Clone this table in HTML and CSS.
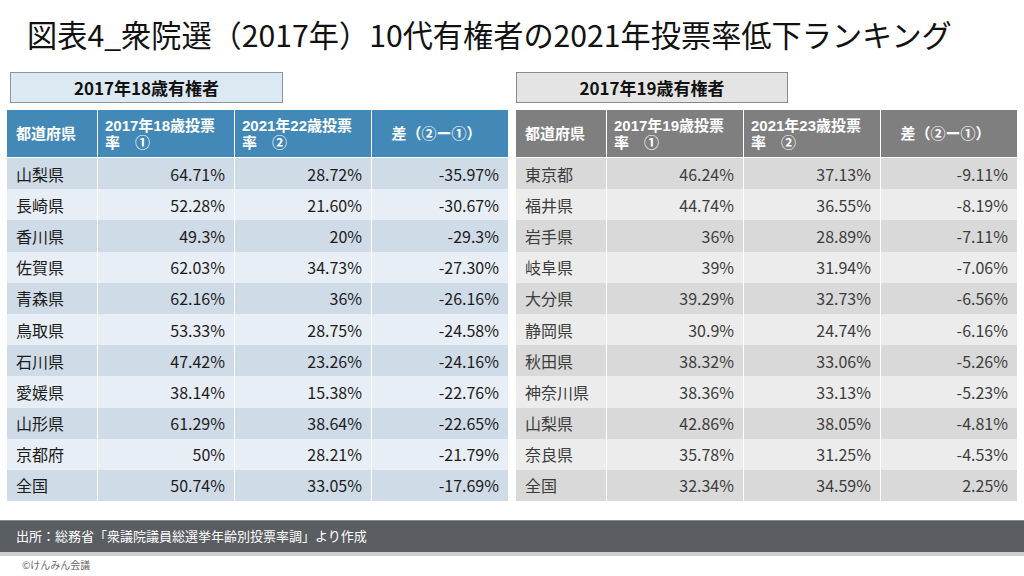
FILE: index.html
```html
<!DOCTYPE html>
<html lang="ja">
<head>
<meta charset="utf-8">
<title>図表4</title>
<link rel="stylesheet" href="styles.css">
</head>
<body>
<div class="page">
  <h1 class="title">図表4_衆院選（2017年）10代有権者の2021年投票率低下ランキング</h1>
  <div class="panels">
    <section class="panel blue">
      <div class="label">2017年18歳有権者</div>
      <div class="grid">
        <div class="h first">都道府県</div>
        <div class="h">2017年18歳投票<br>率　①</div>
        <div class="h">2021年22歳投票<br>率　②</div>
        <div class="h center">差（②ー①）</div>

        <div class="c o name">山梨県</div><div class="c o num">64.71%</div><div class="c o num">28.72%</div><div class="c o num">-35.97%</div>
        <div class="c e name">長崎県</div><div class="c e num">52.28%</div><div class="c e num">21.60%</div><div class="c e num">-30.67%</div>
        <div class="c o name">香川県</div><div class="c o num">49.3%</div><div class="c o num">20%</div><div class="c o num">-29.3%</div>
        <div class="c e name">佐賀県</div><div class="c e num">62.03%</div><div class="c e num">34.73%</div><div class="c e num">-27.30%</div>
        <div class="c o name">青森県</div><div class="c o num">62.16%</div><div class="c o num">36%</div><div class="c o num">-26.16%</div>
        <div class="c e name">鳥取県</div><div class="c e num">53.33%</div><div class="c e num">28.75%</div><div class="c e num">-24.58%</div>
        <div class="c o name">石川県</div><div class="c o num">47.42%</div><div class="c o num">23.26%</div><div class="c o num">-24.16%</div>
        <div class="c e name">愛媛県</div><div class="c e num">38.14%</div><div class="c e num">15.38%</div><div class="c e num">-22.76%</div>
        <div class="c o name">山形県</div><div class="c o num">61.29%</div><div class="c o num">38.64%</div><div class="c o num">-22.65%</div>
        <div class="c e name">京都府</div><div class="c e num">50%</div><div class="c e num">28.21%</div><div class="c e num">-21.79%</div>
        <div class="c o name">全国</div><div class="c o num">50.74%</div><div class="c o num">33.05%</div><div class="c o num">-17.69%</div>
      </div>
    </section>
    <section class="panel gray">
      <div class="label">2017年19歳有権者</div>
      <div class="grid">
        <div class="h first">都道府県</div>
        <div class="h">2017年19歳投票<br>率　①</div>
        <div class="h">2021年23歳投票<br>率　②</div>
        <div class="h center">差（②ー①）</div>

        <div class="c o name">東京都</div><div class="c o num">46.24%</div><div class="c o num">37.13%</div><div class="c o num">-9.11%</div>
        <div class="c e name">福井県</div><div class="c e num">44.74%</div><div class="c e num">36.55%</div><div class="c e num">-8.19%</div>
        <div class="c o name">岩手県</div><div class="c o num">36%</div><div class="c o num">28.89%</div><div class="c o num">-7.11%</div>
        <div class="c e name">岐阜県</div><div class="c e num">39%</div><div class="c e num">31.94%</div><div class="c e num">-7.06%</div>
        <div class="c o name">大分県</div><div class="c o num">39.29%</div><div class="c o num">32.73%</div><div class="c o num">-6.56%</div>
        <div class="c e name">静岡県</div><div class="c e num">30.9%</div><div class="c e num">24.74%</div><div class="c e num">-6.16%</div>
        <div class="c o name">秋田県</div><div class="c o num">38.32%</div><div class="c o num">33.06%</div><div class="c o num">-5.26%</div>
        <div class="c e name">神奈川県</div><div class="c e num">38.36%</div><div class="c e num">33.13%</div><div class="c e num">-5.23%</div>
        <div class="c o name">山梨県</div><div class="c o num">42.86%</div><div class="c o num">38.05%</div><div class="c o num">-4.81%</div>
        <div class="c e name">奈良県</div><div class="c e num">35.78%</div><div class="c e num">31.25%</div><div class="c e num">-4.53%</div>
        <div class="c o name">全国</div><div class="c o num">32.34%</div><div class="c o num">34.59%</div><div class="c o num">2.25%</div>
      </div>
    </section>
  </div>
  <footer class="source">出所：総務省「衆議院議員総選挙年齢別投票率調」より作成</footer>
  <div class="copy">©けんみん会議</div>
</div>
</body>
</html>
```
FILE: styles.css
```css
* { box-sizing: border-box; }
html, body { margin: 0; padding: 0; background: #fff; }
body {
  width: 1024px;
  height: 576px;
  overflow: hidden;
  font-family: "Noto Sans CJK JP", "Noto Sans", sans-serif;
  color: #1a1a1a;
}
.page { display: flex; flex-direction: column; }
.title {
  margin: 0;
  height: 72px;
  padding: 15px 0 0 27px;
  font-size: 30.2px;
  font-weight: 400;
  line-height: 38px;
  color: #111;
  white-space: nowrap;
}
.panels {
  display: flex;
  gap: 11px;
  padding-left: 7px;
}
.panel { width: 498px; display: flex; flex-direction: column; }
.label {
  width: 273px;
  height: 31px;
  margin-left: 3px;
  border: 1px solid #8796a3;
  font-size: 17px;
  font-weight: 700;
  line-height: 29px;
  text-align: center;
  color: #111;
}
.blue .label { background: #dce9f3; }
.gray .label { background: #e4e4e4; border-color: #8a8a8a; margin-left: 0; width: 272px; }
.grid {
  margin-top: 7px;
  display: grid;
  grid-template-columns: 90px 136px 136px 136px;
  grid-template-rows: 48px;
  grid-auto-rows: 31.2px;
  column-gap: 1px;
  background: #fff;
}
.h {
  color: #fff;
  font-family: "Liberation Sans", "Noto Sans CJK JP", sans-serif;
  font-size: 15px;
  font-weight: 700;
  line-height: 17.5px;
  padding: 1px 7px 0;
  display: flex;
  align-items: center;
  border-bottom: 1px solid #fff;
}
.h.first { padding-left: 9px; }
.h.center { justify-content: center; padding-right: 14px; }
.blue .h { background: #4389b8; }
.gray .h { background: #7f7f7f; }
.c {
  font-size: 16px;
  line-height: 1;
  display: flex;
  align-items: center;
  padding: 0 10px;
}
.name { padding-left: 9px; }
.num { justify-content: flex-end; padding-right: 9px; }
.blue .c { color: #1c1c1c; }
.blue .o { background: #cfdbe7; }
.blue .e { background: #e8eef5; }
.gray .c { color: #3d3d3d; }
.gray .o { background: #d9d9d9; }
.gray .e { background: #ececec; }
.source {
  margin-top: 19px;
  height: 36px;
  background: #5a5e62;
  border-top: 1px solid #7d8a92;
  border-bottom: 4px solid #c9cfcf;
  color: #fff;
  font-size: 13px;
  line-height: 30px;
  padding-left: 16px;
}
.copy {
  font-size: 10px;
  color: #666;
  padding: 2px 0 0 22px;
  line-height: 14px;
}
```
